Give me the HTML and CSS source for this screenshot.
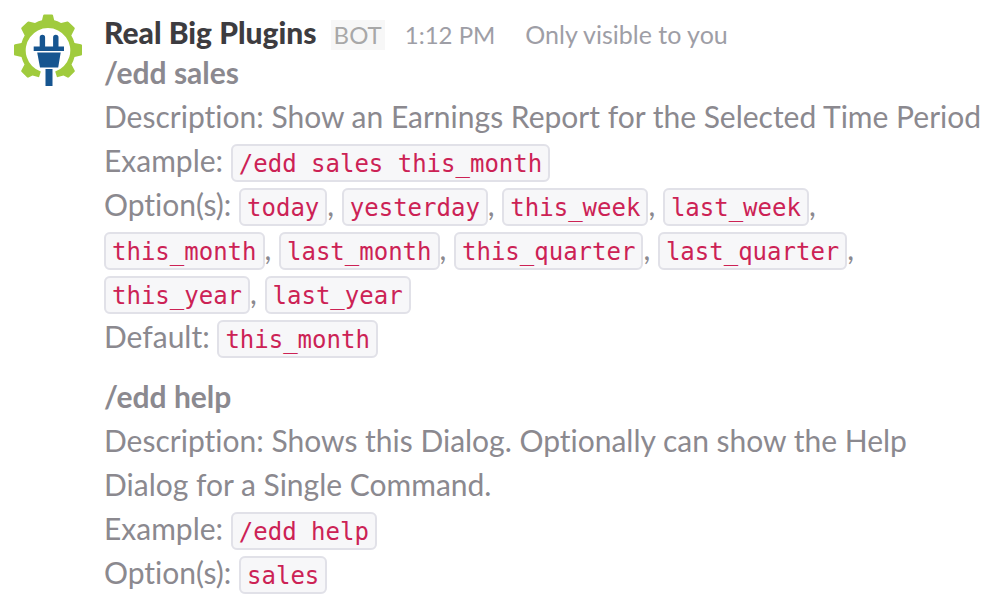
FILE: index.html
```html
<!DOCTYPE html>
<html lang="en">
<head>
<meta charset="utf-8">
<title>Real Big Plugins</title>
<link rel="stylesheet" href="styles.css">
</head>
<body>
<article class="message">
  <svg class="avatar" viewBox="0 0 72 72" role="img" aria-label="Real Big Plugins logo">
    <path fill="#a0cb3d" d="M30 6.300L31.200 1.200Q31.500 .5 32.200 .5H40Q40.800 .5 41 1.200L42.200 6.300Q45.500 7 49 9L55.300 7.500Q56 7.300 56.600 8L62.400 13.600Q63 14.200 62.600 15L59.300 21.500Q61.500 25 62.500 29L69 30.200Q70 30.500 70 31.300V40.500Q70 41.400 69 41.600L62.500 43Q61.500 47 59.500 50.500L62.700 56.500Q63 57.300 62.500 57.800L57 63.300Q56.300 64 55.500 63.600L51.500 61.500L45 63.300L43.200 57.500A22.300 22.300 0 1 0 28.800 57.500L27 63.300L20.500 61.500L16.500 63.600Q15.700 64 15 63.300L9.500 57.800Q9 57.300 9.300 56.500L12.500 50.500Q10.500 47 9.500 43L3 41.600Q2 41.400 2 40.500V31.300Q2 30.500 3 30.200L9.500 29Q10.500 25 12.700 21.500L9.400 15Q9 14.200 9.600 13.600L15.400 8Q16 7.300 16.700 7.500L23 9Q26.500 7 30 6.300Z"/>
    <path fill="#165590" d="M27.700 32.500V23.500a2.700 2.700 0 0 1 5.400 0V32.500h8V23.500a2.700 2.700 0 0 1 5.400 0V32.500H52V37H21.700V32.500zM25.200 38.500H48.700L46.200 53.500H28zM33.500 55H40.500V72H33.500z"/>
  </svg>
  <div class="content">
    <header class="meta">
      <strong class="sender">Real Big Plugins</strong>
      <span class="badge">BOT</span>
      <time class="time">1:12 PM</time>
      <span class="visibility">Only visible to you</span>
    </header>
    <section class="command">
      <h2 class="title">/edd sales</h2>
      <p class="line">Description: Show an Earnings Report for the Selected Time Period</p>
      <p class="line">Example: <code class="code">/edd sales this_month</code></p>
      <p class="line">Option(s): <code class="code">today</code>, <code class="code">yesterday</code>, <code class="code">this_week</code>, <code class="code">last_week</code>, <code class="code">this_month</code>, <code class="code">last_month</code>, <code class="code">this_quarter</code>, <code class="code">last_quarter</code>, <code class="code">this_year</code>, <code class="code">last_year</code></p>
      <p class="line">Default: <code class="code">this_month</code></p>
    </section>
    <section class="command">
      <h2 class="title">/edd help</h2>
      <p class="line">Description: Shows this Dialog. Optionally can show the Help Dialog for a Single Command.</p>
      <p class="line">Example: <code class="code">/edd help</code></p>
      <p class="line">Option(s): <code class="code">sales</code></p>
    </section>
  </div>
</article>
</body>
</html>
```
FILE: styles.css
```css
body {
  margin: 0;
  background: #fff;
  color: #8b898f;
  font: 30px/44px Lato, sans-serif;
  font-variant-ligatures: none;
}

.message {
  display: flex;
  gap: 20px;
  padding: 14px 12px 8px 12px;
}

.avatar {
  flex: none;
  width: 72px;
  height: 72px;
}

.content {
  flex: 1;
  min-width: 0;
}

.meta {
  display: flex;
  align-items: baseline;
  padding-top: 3px;
  font-size: 24px;
  line-height: 30px;
  color: #9e9ea6;
}

.sender {
  font-size: 30px;
  font-weight: 900;
  color: #3d3c40;
}

.badge {
  margin-left: 10px;
  padding: 0 3px;
  background: #f7f7f7;
  color: #a8a8a8;
}

.sender + .badge {
  margin-left: 14px;
}

.time {
  margin-left: 20px;
}

.visibility {
  margin-left: 30px;
  font-size: 25px;
}

.command + .command {
  margin-top: 16px;
}

.title,
.line {
  margin: 0;
  font-size: 30px;
}

.title {
  font-weight: 700;
}

.code {
  padding: 4px 6px 2px;
  border: 2px solid #e1e1e8;
  border-radius: 6px;
  background: #f7f7f9;
  color: #cc2255;
  font: 24px/24px "DejaVu Sans Mono", monospace;
}
```
